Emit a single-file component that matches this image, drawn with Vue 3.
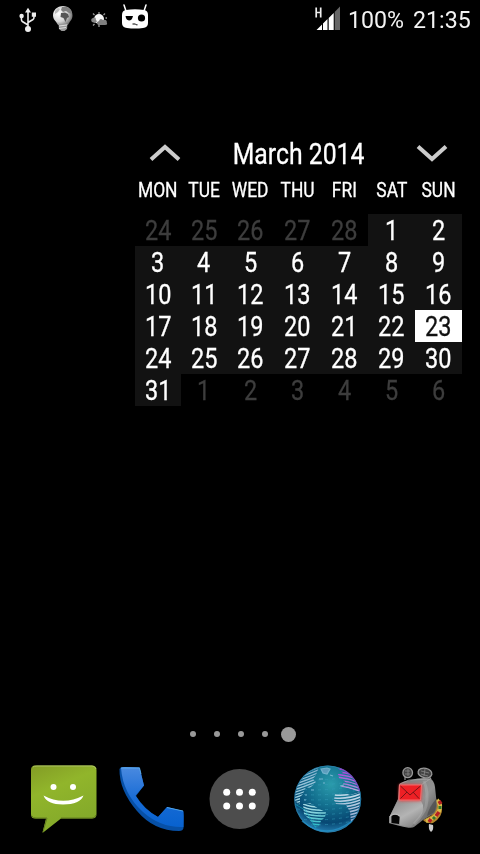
<script setup>
const weekdays = ['MON', 'TUE', 'WED', 'THU', 'FRI', 'SAT', 'SUN']
const days = Array.from({ length: 42 }, (_, i) => {
  const n = i - 4
  const outside = n < 1 || n > 31
  return { label: n < 1 ? n + 28 : n > 31 ? n - 31 : n, outside, today: n === 23 }
})
</script>

<template>
  <main class="screen">
    <header class="status">
      <div class="notices">
        <svg class="usb" width="18" height="26" viewBox="0 0 18 26">
          <g fill="none" stroke="#eee" stroke-width="1.6">
            <path d="M9 4V21M9 18L3.3 14.5Q2.4 14 2.4 12V9M9 15.5L14 12.5Q15 12 15 10V8" />
          </g>
          <path d="M9 .8L12 5.5H6ZM12.8 5.5H17V9.7H12.8Z" fill="#eee" />
          <circle cx="2.6" cy="9" r="2.2" fill="#eee" />
          <circle cx="9" cy="22" r="3" fill="#eee" />
        </svg>
        <svg class="bulb" width="22" height="28" viewBox="0 0 22 28">
          <defs>
            <radialGradient id="bulbG" cx=".3" cy=".4" r=".7"><stop offset="0" stop-color="#fff" /><stop offset=".6" stop-color="#d5d5d5" /><stop offset="1" stop-color="#777" /></radialGradient>
          </defs>
          <path d="M11 1C5 1 1 5.300 1 10.500C1 15 5 17 6 20H16C17 17 20.500 15 20.500 10.500C20.500 5 17 1 11 1Z" fill="url(#bulbG)" />
          <path d="M10 2L15 2L19 5L20 9L17 8L14 6L11 7L9 5Z" fill="#808080" />
          <path d="M9 8L13 7.500L16 9L17 12L15 13L13.500 17L11.500 13L8.500 12Z" fill="#555" />
          <path d="M3 6L6 3L8 4L6 7L3 9Z" fill="#bbb" />
          <path d="M6.500 19H15.500L15 24L12.500 26H9.500L7 24Z" fill="#999" />
          <path d="M7 21L15 20M7 23.500L14 22.500" stroke="#ddd" />
        </svg>
        <svg class="weather" width="18" height="16" viewBox="0 0 18 16">
          <path d="M8 0V2M2 1.500L3.500 3M14 1.500L12.500 3M2 13.500L3.500 12M8 15V13M14.500 6H16" stroke="#999" stroke-width="1.300" />
          <circle cx="8" cy="7" r="5" fill="#f5f5f5" />
          <path d="M1 10Q-1 7 2 6Q5 4 5 8Q7 10 4 11Z" fill="#888" />
          <path d="M7 13Q4.500 10 8 9Q9 5.500 12 8Q16 7 15.800 10.500Q17 13 14 13Z" fill="#808080" />
        </svg>
        <svg class="cid" width="28" height="26" viewBox="0 0 28 26">
          <path d="M5 7L3 1M23 7L25 1" stroke="#fff" stroke-width="1.500" stroke-linecap="round" />
          <path d="M5 6Q14 4.500 23 6Q27 6.500 27 11V19Q27 23.500 22 24Q14 25 6 24Q1 23.500 1 19V11Q1 6.500 5 6Z" fill="#fff" />
          <path d="M4.500 12H12Q11 16.500 8 16.500Q5 16 4.500 12Z" fill="#000" />
          <circle cx="20.500" cy="14" r="3.600" fill="#000" />
          <path d="M11.500 20H14.500Q15 21.300 16.500 20.800" fill="none" stroke="#000" />
        </svg>
      </div>
      <svg class="signal" width="27" height="26" viewBox="0 0 27 26">
        <path d="M2.500 25L8 19.500V25ZM9 18.500L13.500 14V25H9ZM14.700 13L19.700 8V25H14.700Z" fill="#fff" />
        <path d="M20.700 7L26 1.500V25H20.700Z" fill="#666" />
        <path d="M2.200 2.500V12.500M6.700 2.500V12.500M2.200 7.500H6.700" stroke="#eee" stroke-width="1.700" />
      </svg>
      <span class="battery">100%</span>
      <time class="clock">21:35</time>
    </header>

    <section class="calendar">
      <div class="cal-head">
        <svg width="32" height="18" viewBox="0 0 32 18"><path d="M2 15.500L16 3L30 15.500" fill="none" stroke="#ccc" stroke-width="4" /></svg>
        <h1><span class="cond">March 2014</span></h1>
        <svg width="32" height="18" viewBox="0 0 32 18"><path d="M2 2.500L16 15L30 2.500" fill="none" stroke="#ccc" stroke-width="4" /></svg>
      </div>
      <div class="grid names">
        <div v-for="d in weekdays" :key="d"><span class="cond">{{ d }}</span></div>
      </div>
      <div class="grid dates">
        <div v-for="(d, i) in days" :key="i" :class="{ outside: d.outside, today: d.today }"><span class="cond">{{ d.label }}</span></div>
      </div>
    </section>

    <nav class="pages"><i v-for="n in 5" :key="n" :class="{ current: n === 5 }"></i></nav>

    <footer class="dock">
      <svg width="90" height="90" viewBox="0 0 90 90">
        <defs><linearGradient id="msgG" x1="0" y1="0" x2=".4" y2="1"><stop offset="0" stop-color="#839c25" /><stop offset=".4" stop-color="#91b52b" /><stop offset="1" stop-color="#83a92a" /></linearGradient></defs>
        <path d="M15 10.500H72Q76.500 10.500 76.500 15V59Q76.500 63.500 72 63.500H41L22.500 78L26 63.500H15Q11 63.500 11 59V15Q11 10.500 15 10.500Z" fill="url(#msgG)" />
        <path d="M13 12Q14 11 17 11H72Q75 11 76 14" fill="none" stroke="#acc264" />
        <path d="M12 61Q13 63 16 63H27L23 77M41 63H72Q75 63 76 60" fill="none" stroke="#657f20" />
        <circle cx="33.500" cy="32" r="3" fill="#fff" /><circle cx="53" cy="32" r="3" fill="#fff" />
        <path d="M23.500 40.500Q43 51 63.500 40.500Q60 49.500 43 49.500Q27 49.500 23.500 40.500Z" fill="#fff" />
      </svg>
      <svg width="90" height="90" viewBox="0 0 90 90">
        <defs><linearGradient id="phG" x1="0" y1="0" x2="0" y2="1"><stop offset="0" stop-color="#4a8ae0" /><stop offset=".55" stop-color="#176bd5" /><stop offset="1" stop-color="#0862cf" /></linearGradient></defs>
        <path d="M9.500 14Q10 12 13 12L29.500 12.500L34 30.500L26 41Q34 54 48 62L57 52L73.500 56V73Q73 76 69 76Q44 76 27 56Q9 35 9.500 14Z" fill="#0750a6" />
        <path d="M11 13Q12 12 15 12L29.500 12.500L34 30.500L25.500 40.500Q34 55 48 62L57 52L73 56Q74 57 73.500 72Q51 73 33 57Q13 39 11 13Z" fill="url(#phG)" />
        <path d="M11 13H29.500L31 19M57 52.500L73 56" fill="none" stroke="#60b2ee" stroke-width=".8" />
      </svg>
      <svg width="90" height="90" viewBox="0 0 90 90">
        <circle cx="44.500" cy="44" r="30" fill="#4d4d4d" />
        <g fill="#fff"><template v-for="x in [31.700, 44.500, 57.300]" :key="x"><circle :cx="x" cy="37.300" r="3.500" /><circle :cx="x" cy="51" r="3.500" /></template></g>
      </svg>
      <svg width="90" height="90" viewBox="0 0 90 90">
        <defs>
          <radialGradient id="glG" cx=".55" cy=".28" r=".72"><stop offset="0" stop-color="#2b9cac" /><stop offset=".45" stop-color="#13708f" /><stop offset=".8" stop-color="#074873" /><stop offset="1" stop-color="#247daf" /></radialGradient>
          <linearGradient id="landR" gradientUnits="userSpaceOnUse" x1="68" y1="16" x2="62" y2="68"><stop offset="0" stop-color="#b03ddb" /><stop offset=".3" stop-color="#a987d8" /><stop offset=".45" stop-color="#c2dcea" /><stop offset="1" stop-color="#8a9fc8" /></linearGradient>
          <linearGradient id="landL" gradientUnits="userSpaceOnUse" x1="25" y1="15" x2="28" y2="73"><stop offset="0" stop-color="#8eb4d2" /><stop offset=".65" stop-color="#a4dbe4" /><stop offset="1" stop-color="#20b9c4" /></linearGradient>
          <clipPath id="west"><path d="M34 12L31 20L28 24L31 27L25 33L21 32L18 39L15 42L15 49L9 46L10 34L16 23L26 14Z" /></clipPath>
          <clipPath id="south"><path d="M18 49L25 48L34 54L41 57L40 62L36 66L34 71L30 72L25 65L19 59Z" /></clipPath>
          <clipPath id="europe"><path d="M53 19L58 18L52 12Q65 15 71 26L75 38L69 35L62 33L56 32L60 26L54 23Z" /></clipPath>
          <clipPath id="africa"><path d="M50 39L57 37L65 40L75 37L75 48L73 60L66 67L65 57L61 50L51 49L49 45Z" /></clipPath>
          <clipPath id="ball"><circle cx="42.700" cy="44" r="33" /></clipPath>
        </defs>
        <circle cx="42.700" cy="44" r="33.500" fill="url(#glG)" />
        <g clip-path="url(#ball)">
          <g fill="none" stroke="#369dba" stroke-width="1" stroke-dasharray="3 4" opacity=".55"><path v-for="n in 10" :key="n" :d="`M12 ${19+n*5}Q42 ${22+n*5} 73 ${15+n*5}`" /></g>
          <g clip-path="url(#west)" fill="none" stroke="url(#landL)" stroke-width="1.300"><path v-for="n in 16" :key="n" :d="`M5 ${17+n*2.700}Q20 ${13+n*2.700} 42 ${3+n*2.700}`" /></g>
          <g clip-path="url(#south)" fill="none" stroke="url(#landL)" stroke-width="1.500"><path v-for="n in 11" :key="n" :d="`M15 ${42+n*2.900}Q28 ${48+n*2.900} 44 ${46+n*2.900}`" /></g>
          <g clip-path="url(#europe)" fill="none" stroke="url(#landR)" stroke-width="1.400"><path v-for="n in 13" :key="n" :d="`M49 ${5+n*2.800}Q63 ${6+n*2.800} 78 ${12+n*2.800}`" /></g>
          <g clip-path="url(#africa)" fill="none" stroke="url(#landR)" stroke-width="1.500"><path v-for="n in 12" :key="n" :d="`M48 ${37+n*2.900}Q64 ${39+n*2.900} 78 ${32+n*2.900}`" /></g>
          <path d="M36 14l6-1 3 1-3 5-4-1zM34 24h4M38 28h2M45 20l3 1M55 31l4-1M26 35h3M20 40h2M19 45h2" fill="#75a9cb" stroke="#8fc4df" stroke-width="1.200" opacity=".75" />
          <path d="M10 49L20 55L27 66L31 73" fill="none" stroke="#15a7bd" stroke-width="1" opacity=".65" />
        </g>
        <circle cx="42.700" cy="44" r="33" fill="none" stroke="#2d81ac" opacity=".75" />
        <path d="M55 13.500Q69 18 74.500 36" fill="none" stroke="#a437d2" stroke-width="1.300" opacity=".7" />
        <path d="M17 66Q41 86 67 66" fill="none" stroke="#2594ca" stroke-width="1.500" opacity=".7" />
      </svg>
      <svg width="90" height="90" viewBox="0 0 90 90">
        <defs>
          <linearGradient id="dogG" x1="0" y1="0" x2="1" y2=".8"><stop offset="0" stop-color="#777" /><stop offset=".65" stop-color="#929292" /><stop offset="1" stop-color="#555" /></linearGradient>
          <linearGradient id="snoutG" x1="0" y1="0" x2=".7" y2="1"><stop offset="0" stop-color="#888" /><stop offset=".6" stop-color="#b4b4b4" /><stop offset="1" stop-color="#858585" /></linearGradient>
          <filter id="redGlow" x="-30%" y="-30%" width="160%" height="160%"><feGaussianBlur stdDeviation="1.500" /></filter>
        </defs>
        <path d="M60 44Q66 45 67 52Q68 62 58 68Q52 69 48 65L57 60Z" fill="#b5872b" />
        <path d="M62 45Q67 50 64 56Q61 63 51 66" fill="none" stroke="#d9ba4a" stroke-width="4" />
        <path d="M64 46L66 49M64 57L61 61M56 64L54 67" stroke="#b42122" stroke-width="3.500" />
        <path d="M65 51L65 54M60 62L58 64" stroke="#33742f" stroke-width="3" />
        <path d="M54 69Q53 74 56 77Q59 75 58 70Z" fill="#ccc" />
        <path d="M24 29Q28 26 36 25Q46 22 55 23.500Q59 25 60 32L62 51Q61 58 56.500 60L48 65L39 72Q36 74 25 71L14.300 68.300V62L23 44Z" fill="url(#dogG)" />
        <path d="M23 45L46 46Q51 53 45 62L36 72L25 70V61L14.500 62Z" fill="url(#snoutG)" />
        <path d="M49 26Q54 38 51 51Q49 59 39 69" fill="none" stroke="#bbb" stroke-width="3" opacity=".35" />
        <path d="M46 30L55 24M25 29L34 25L55 24" fill="none" stroke="#aaa" stroke-width=".7" />
        <path d="M61 44Q54 52 52 61L58 58Q62 55 61 44Z" fill="#444" opacity=".6" />
        <path d="M16.500 61Q21 58 24.500 62L24 69L16.500 68Z" fill="#050505" />
        <path d="M15 68V61Q20 57 25 61" fill="none" stroke="#bbb" stroke-width="1" />
        <path d="M30 25V21M56 24L54 21" stroke="#aaa" />
        <g fill="#444" stroke="#999" stroke-width="1.300"><ellipse cx="32.700" cy="17.700" rx="4.800" ry="5" /><ellipse cx="50" cy="18" rx="7" ry="4.700" transform="rotate(12 50 18)" /></g>
        <path d="M30 16H35M30 19H35M33 14V21M46 16L54 18M46 19L53 21M50 14L49 21" stroke="#888" stroke-width=".8" />
        <path d="M24 29.500H47L46 46H24Z" fill="#f33" filter="url(#redGlow)" opacity=".85" />
        <path d="M24.500 30H46.500L45.500 45H24Z" fill="#ee2025" stroke="#fa7a7a" stroke-width=".8" />
        <path d="M25.500 31L35 40L45.500 31M25.500 43.500L32 37M44 43.500L38 37" fill="none" stroke="#791316" stroke-width="1" />
      </svg>
    </footer>
  </main>
</template>

<style>
body { margin: 0; background: #000; }
</style>
<style scoped>
.screen { width: 480px; height: 854px; background: #000; color: #fff; font-family: Roboto, "Liberation Sans", sans-serif; overflow: hidden; display: flex; flex-direction: column; }
.status { height: 40px; display: flex; align-items: flex-start; flex: none; }
.notices { display: flex; align-items: flex-start; width: 314px; }
.usb { margin: 7px 0 0 19px; }
.bulb { margin: 5px 0 0 15px; }
.weather { margin: 12px 0 0 17px; }
.cid { margin: 4px 0 0 12px; }
.signal { margin-top: 5px; }
.battery, .clock { font-size: 24px; line-height: 28px; margin-top: 6px; white-space: nowrap; color: #f3f3f3; transform: scaleX(.965); transform-origin: left; }
.battery { margin-left: 7px; width: 65px; }
.calendar { width: 327px; margin: 90px 0 0 135px; flex: none; }
.cal-head { height: 46px; display: flex; align-items: center; justify-content: space-between; padding: 0 14px; }
h1 { margin: 0; font-weight: 400; font-size: 28.800px; line-height: 46px; width: 132px; padding: 1px 0 0 1px; display: flex; justify-content: center; }
h1 .cond { transform: scaleX(.86); }
.cond { display: inline-block; transform: scaleX(.87); white-space: nowrap; flex: none; -webkit-text-stroke: .3px currentColor; }
.grid { display: grid; grid-template-columns: 46px 46px repeat(5, 47px); }
.grid > div { display: flex; align-items: center; justify-content: center; }
.names { height: 38px; font-size: 20px; align-items: start; }
.names > div { height: 28px; }
.dates { grid-auto-rows: 32px; font-size: 27px; line-height: 32px; }
.dates > div { background: #121212; padding-top: 1px; height: 31px; }
.dates > .outside { background: #000; color: #3d3d3d; }
.dates > .today { background: #fff; color: #111; }
.pages { height: 16px; margin: 320px 0 0 189.500px; display: flex; align-items: center; gap: 18px; flex: none; }
.pages i { width: 6px; height: 6px; border-radius: 50%; background: #999; }
.pages .current { width: 15px; height: 15px; margin-left: -4.500px; }
.dock { display: flex; margin: 13px 0 0 20px; }
.dock svg { flex: none; }
.dock svg:nth-child(3) { margin-left: -5px; }
</style>
